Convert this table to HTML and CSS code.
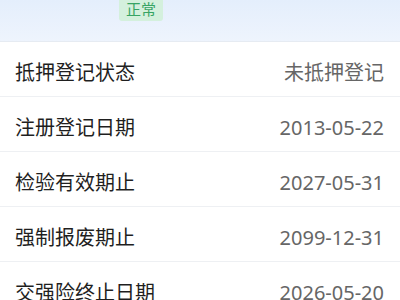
FILE: index.html
```html
<!DOCTYPE html>
<html lang="zh-CN">
<head>
<meta charset="utf-8">
<link rel="stylesheet" href="styles.css">
</head>
<body>
<div class="header">
  <span class="badge">正常</span>
</div>
<div class="list">
  <div class="row"><span class="label">抵押登记状态</span><span class="value">未抵押登记</span></div>
  <div class="row"><span class="label">注册登记日期</span><span class="value">2013-05-22</span></div>
  <div class="row"><span class="label">检验有效期止</span><span class="value">2027-05-31</span></div>
  <div class="row"><span class="label">强制报废期止</span><span class="value">2099-12-31</span></div>
  <div class="row"><span class="label">交强险终止日期</span><span class="value">2026-05-20</span></div>
</div>
</body>
</html>
```
FILE: styles.css
```css
html, body {
  margin: 0;
  padding: 0;
  background: #ffffff;
  font-family: "Noto Sans", "Noto Sans CJK SC", sans-serif;
  overflow: hidden;
}
.header {
  height: 41px;
  background: linear-gradient(180deg, #e4eefc 0%, #eef4fd 100%);
  border-bottom: 1px solid #e6ebf2;
  display: flex;
  align-items: flex-start;
  padding-left: 119px;
}
.badge {
  display: block;
  width: 44px;
  height: 21px;
  box-sizing: border-box;
  background: #d4f0dd;
  color: #38a464;
  font-size: 15px;
  line-height: 18px;
  text-align: center;
  border-radius: 0 0 3px 3px;
}
.list {
  display: flex;
  flex-direction: column;
}
.row {
  height: 54px;
  box-sizing: content-box;
  border-bottom: 1px solid #eef0f3;
  display: flex;
  align-items: center;
  justify-content: space-between;
  padding: 0 16px 0 15px;
}
.row > span {
  padding-top: 8px;
  font-size: 20px;
  line-height: 28px;
}
.label {
  color: #1f1f1f;
}
.value {
  color: #666666;
}
```
